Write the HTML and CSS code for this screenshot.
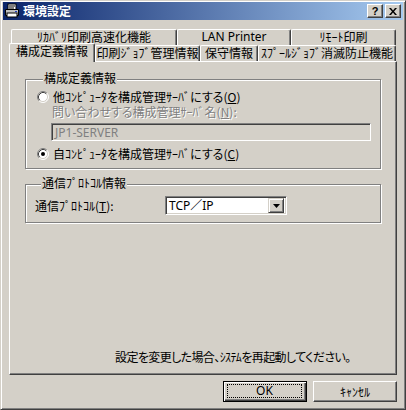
FILE: index.html
```html
<!DOCTYPE html>
<html lang="ja">
<head>
<meta charset="utf-8">
<title>環境設定</title>
<link rel="stylesheet" href="styles.css">
</head>
<body>
<div class="window">
  <div class="titlebar">
    <svg class="app-icon" width="16" height="16" viewBox="0 0 16 16">
      <rect x="4" y="1" width="8" height="6" fill="#fff" stroke="#000"/>
      <path d="M1.5 6.5h13v6h-13z" fill="#c0c0c0" stroke="#000"/>
      <rect x="3" y="10" width="10" height="4" fill="#fff" stroke="#000"/>
      <rect x="11" y="8" width="2" height="1" fill="#2040c0"/>
      <path d="M5 3h6M5 5h5" stroke="#000"/>
    </svg>
    <span class="title">環境設定</span>
    <div class="title-buttons">
      <span class="tbtn help">?</span>
      <span class="tbtn close"><svg width="8" height="7" viewBox="0 0 8 7"><path d="M0 0h2l2 2.5 2-2.5h2l-3 3.5 3 3.5h-2l-2-2.5-2 2.5h-2l3-3.5z" fill="#000"/></svg></span>
    </div>
  </div>
  <div class="content">
    <div class="tabs">
      <div class="tab-row">
        <div class="tab t-recovery"><span class="hk">ﾘｶﾊﾞﾘ</span>印刷高速化機能</div>
        <div class="tab t-lan">LAN Printer</div>
        <div class="tab t-remote"><span class="hk">ﾘﾓｰﾄ</span>印刷</div>
      </div>
      <div class="tab-row">
        <div class="tab active t-config">構成定義情報</div>
        <div class="tab t-job">印刷<span class="hk">ｼﾞｮﾌﾞ</span>管理情報</div>
        <div class="tab t-maint">保守情報</div>
        <div class="tab t-spool"><span class="hk">ｽﾌﾟｰﾙｼﾞｮﾌﾞ</span>消滅防止機能</div>
      </div>
    </div>
    <div class="panel">
      <div class="group group-config">
        <div class="legend">構成定義情報</div>
        <div class="radio-row first">
          <svg class="radio" width="12" height="12" viewBox="0 0 12 12">
            <circle cx="6" cy="6" r="5" fill="#fff"/>
            <path d="M2.11 9.89A5.5 5.5 0 0 1 9.89 2.11" fill="none" stroke="#808080"/>
            <path d="M9.89 2.11A5.5 5.5 0 0 1 2.11 9.89" fill="none" stroke="#fff"/>
            <path d="M2.82 9.18A4.5 4.5 0 0 1 9.18 2.82" fill="none" stroke="#404040"/>
            <path d="M9.18 2.82A4.5 4.5 0 0 1 2.82 9.18" fill="none" stroke="#d4d0c8"/>
          </svg>
          <span>他<span class="hk">ｺﾝﾋﾟｭｰﾀ</span>を構成管理<span class="hk">ｻｰﾊﾞ</span>にする(<u>O</u>)</span>
        </div>
        <div class="disabled-label">問い合わせする構成管理<span class="hk">ｻｰﾊﾞ</span>名(<u>N</u>):</div>
        <div class="textbox disabled">JP1-SERVER</div>
        <div class="radio-row second">
          <svg class="radio" width="12" height="12" viewBox="0 0 12 12">
            <circle cx="6" cy="6" r="5" fill="#fff"/>
            <path d="M2.11 9.89A5.5 5.5 0 0 1 9.89 2.11" fill="none" stroke="#808080"/>
            <path d="M9.89 2.11A5.5 5.5 0 0 1 2.11 9.89" fill="none" stroke="#fff"/>
            <path d="M2.82 9.18A4.5 4.5 0 0 1 9.18 2.82" fill="none" stroke="#404040"/>
            <path d="M9.18 2.82A4.5 4.5 0 0 1 2.82 9.18" fill="none" stroke="#d4d0c8"/>
            <circle cx="6" cy="6" r="2" fill="#000"/>
          </svg>
          <span>自<span class="hk">ｺﾝﾋﾟｭｰﾀ</span>を構成管理<span class="hk">ｻｰﾊﾞ</span>にする(<u>C</u>)</span>
        </div>
      </div>
      <div class="group group-proto">
        <div class="legend">通信<span class="hk">ﾌﾟﾛﾄｺﾙ</span>情報</div>
        <div class="field-row">
          <span class="field-label">通信<span class="hk">ﾌﾟﾛﾄｺﾙ</span>(<u>T</u>):</span>
          <div class="combo">
            <span class="combo-value">TCP／IP</span>
            <span class="combo-btn"><svg width="7" height="4" viewBox="0 0 7 4"><path d="M0 0h7L3.5 4z" fill="#000"/></svg></span>
          </div>
        </div>
      </div>
      <div class="message">設定を変更した場合、<span class="hk">ｼｽﾃﾑ</span>を再起動してください。</div>
    </div>
    <div class="buttons">
      <div class="btn default"><span class="focus">OK</span></div>
      <div class="btn"><span class="hk">ｷｬﾝｾﾙ</span></div>
    </div>
  </div>
</div>
</body>
</html>
```

FILE: styles.css
```css
* { box-sizing: border-box; }
html, body { margin: 0; padding: 0; }
body {
  width: 406px;
  height: 410px;
  overflow: hidden;
  background: #d4d0c8;
  font-family: "Noto Sans CJK JP", sans-serif;
  font-size: 12px;
  line-height: 14px;
  color: #000;
  font-feature-settings: "palt";
}
.hk { font-feature-settings: normal; }
u { text-decoration: underline; text-underline-offset: 1px; }

.window {
  width: 406px;
  height: 410px;
  background: #d4d0c8;
  border: 1px solid;
  border-color: #d4d0c8 #404040 #404040 #d4d0c8;
  box-shadow: inset 1px 1px #fff, inset -1px -1px #808080;
  padding: 1px 2px 2px 2px;
  display: flex;
  flex-direction: column;
}

.titlebar {
  height: 18px;
  background: linear-gradient(to right, #0a246a, #a6caf0);
  display: flex;
  align-items: center;
  padding: 0 2px 0 1px;
}
.app-icon { flex: none; display: block; }
.title {
  margin-left: 3px;
  color: #fff;
  font-weight: bold;
  font-size: 12px;
}
.title-buttons {
  margin-left: auto;
  display: flex;
  gap: 2px;
}
.tbtn {
  width: 16px;
  height: 14px;
  background: #d4d0c8;
  border: 1px solid;
  border-color: #fff #404040 #404040 #fff;
  box-shadow: inset -1px -1px #808080;
  display: flex;
  align-items: center;
  justify-content: center;
  font-family: "Liberation Sans", sans-serif;
  font-weight: bold;
  font-size: 11px;
  line-height: 12px;
}
.tbtn svg { display: block; }

.content {
  flex: 1;
  padding: 9px 6px 0 6px;
  display: flex;
  flex-direction: column;
}

.tabs { margin-left: 2px; width: 385px; }
.tab-row { display: flex; align-items: flex-start; height: 16px; }
.tab {
  flex: none;
  height: 16px;
  border-top: 1px solid #fff;
  border-left: 1px solid #fff;
  border-right: 1px solid #404040;
  border-radius: 2px 2px 0 0;
  box-shadow: inset -1px 0 #808080;
  text-align: center;
  white-space: nowrap;
  overflow: hidden;
  background: #d4d0c8;
}
.t-recovery { width: 166px; }
.t-lan { width: 114px; font-family: "Noto Sans", "Noto Sans CJK JP", sans-serif; }
.t-remote { width: 105px; }
.t-config { width: 84px; }
.t-job { width: 105px; }
.t-maint { width: 58px; }
.t-spool { width: 138px; }
.tab.active {
  width: 86px;
  height: 19px;
  margin: -2px 0 -1px -2px;
  position: relative;
  z-index: 1;
}

.panel {
  height: 314px;
  border: 1px solid;
  border-color: #fff #404040 #404040 #fff;
  box-shadow: inset -1px -1px #808080;
  padding: 17px 15px 10px 15px;
  display: flex;
  flex-direction: column;
}

.group {
  border: 1px solid #808080;
  box-shadow: inset 1px 1px #fff, 1px 1px #fff;
  display: flex;
  flex-direction: column;
  align-items: flex-start;
}
.legend {
  margin: -9px 0 0 6px;
  padding: 0 1px;
  background: #d4d0c8;
}
.group-config { padding: 0 9px 7px 11px; }
.radio-row { display: flex; align-items: center; gap: 4px; height: 14px; }
.radio { display: block; flex: none; }
.radio-row.first { margin-top: 5px; }
.radio-row.second { margin-top: 6px; }
.disabled-label {
  margin: 1px 0 0 15px;
  color: #808080;
  text-shadow: 1px 1px 0 #fff;
}
.textbox {
  margin: 4px 0 0 14px;
  width: 320px;
  height: 18px;
  border: 1px solid;
  border-color: #808080 #fff #fff #808080;
  box-shadow: inset 1px 1px #404040, inset -1px -1px #d4d0c8;
  padding: 1px 3px 0 3px;
  font-family: "Noto Sans", sans-serif;
  line-height: 15px;
}
.textbox.disabled { background: #d4d0c8; color: #808080; }

.group-proto { margin-top: 15px; padding: 0 9px 7px 9px; }
.field-row { margin-top: 6px; display: flex; align-items: center; }
.field-label { width: 130px; flex: none; }
.combo {
  width: 122px;
  height: 19px;
  background: #fff;
  border: 1px solid;
  border-color: #808080 #fff #fff #808080;
  box-shadow: inset 1px 1px #404040, inset -1px -1px #d4d0c8;
  padding: 2px 2px 2px 3px;
  display: flex;
  align-items: center;
}
.combo-value { flex: 1; font-family: "Noto Sans", "Noto Sans CJK JP", sans-serif; line-height: 14px; }
.combo-btn {
  width: 16px;
  height: 15px;
  flex: none;
  background: #d4d0c8;
  border: 1px solid;
  border-color: #d4d0c8 #404040 #404040 #d4d0c8;
  box-shadow: inset 1px 1px #fff, inset -1px -1px #808080;
  display: flex;
  align-items: center;
  justify-content: center;
}
.combo-btn svg { display: block; }

.message {
  margin-top: auto;
  margin-left: 90px;
  align-self: flex-start;
  white-space: nowrap;
  letter-spacing: -0.6px;
}

.buttons {
  margin-top: 6px;
  display: flex;
  justify-content: flex-end;
  gap: 6px;
}
.btn {
  width: 84px;
  height: 21px;
  border: 1px solid;
  border-color: #fff #404040 #404040 #fff;
  box-shadow: inset -1px -1px #808080;
  display: flex;
  align-items: center;
  justify-content: center;
}
.btn.default {
  border-color: #000;
  box-shadow: inset 1px 1px #fff, inset -1px -1px #404040, inset -2px -2px #808080;
  padding: 2px 4px 3px 3px;
}
.focus {
  flex: 1;
  align-self: stretch;
  border: 1px dotted #000;
  display: flex;
  align-items: center;
  justify-content: center;
  font-family: "Noto Sans", sans-serif;
}
```
